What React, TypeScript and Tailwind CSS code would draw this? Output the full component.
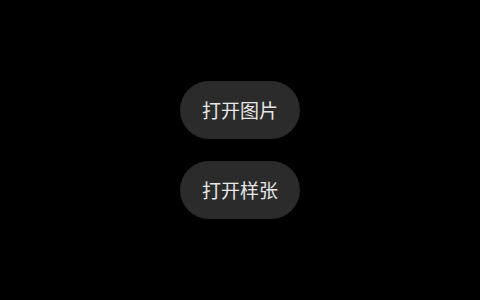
export default function App() {
  return (
    <div className="w-[480px] h-[300px] bg-black flex flex-col items-center justify-center gap-[22px]" style={{ fontFamily: '"Noto Sans CJK SC", "Noto Sans", sans-serif' }}>
      <button className="w-[120px] h-[58px] rounded-full bg-[#2b2b2b] text-[#e6e6e6] text-[19px] leading-none pb-px flex items-center justify-center">打开图片</button>
      <button className="w-[120px] h-[58px] rounded-full bg-[#2b2b2b] text-[#e6e6e6] text-[19px] leading-none pb-px flex items-center justify-center">打开样张</button>
    </div>
  );
}
